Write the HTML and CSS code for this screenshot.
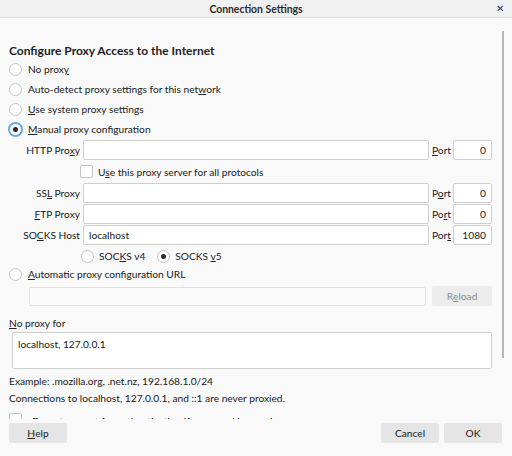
FILE: index.html
```html
<!DOCTYPE html>
<html>
<head>
<meta charset="utf-8">
<link rel="stylesheet" href="styles.css">
</head>
<body>
<div class="window">
  <div class="titlebar">
    <span class="title">Connection Settings</span>
    <span class="close">✕</span>
  </div>
  <div class="content">
    <div class="scrollbar"></div>
    <h1 class="heading">Configure Proxy Access to the Internet</h1>
    <div class="radio-row"><span class="radio"></span><span>No prox<u>y</u></span></div>
    <div class="radio-row"><span class="radio"></span><span>Auto-detect proxy settings for this net<u>w</u>ork</span></div>
    <div class="radio-row"><span class="radio"></span><span><u>U</u>se system proxy settings</span></div>
    <div class="radio-row"><span class="radio checked focus"></span><span><u>M</u>anual proxy configuration</span></div>

    <div class="proxy-grid">
      <label class="plabel">HTTP Pro<u>x</u>y</label>
      <div class="input"></div>
      <label class="port-label"><u>P</u>ort</label>
      <div class="input port">0</div>

      <div class="check-row">
        <span class="checkbox"></span><span>U<u>s</u>e this proxy server for all protocols</span>
      </div>

      <label class="plabel">SS<u>L</u> Proxy</label>
      <div class="input"></div>
      <label class="port-label">P<u>o</u>rt</label>
      <div class="input port">0</div>

      <label class="plabel"><u>F</u>TP Proxy</label>
      <div class="input"></div>
      <label class="port-label">Po<u>r</u>t</label>
      <div class="input port">0</div>

      <label class="plabel">SO<u>C</u>KS Host</label>
      <div class="input text">localhost</div>
      <label class="port-label">Por<u>t</u></label>
      <div class="input port">1080</div>

      <div class="socks-row">
        <span class="radio"></span><span class="socks-label">SOC<u>K</u>S v4</span>
        <span class="radio checked"></span><span>SOCKS <u>v</u>5</span>
      </div>
    </div>

    <div class="radio-row auto"><span class="radio"></span><span><u>A</u>utomatic proxy configuration URL</span></div>
    <div class="url-row">
      <div class="input url disabled"></div>
      <div class="button reload">R<u>e</u>load</div>
    </div>

    <div class="noproxy-label"><u>N</u>o proxy for</div>
    <div class="textarea">localhost, 127.0.0.1</div>
    <div class="note">Example: .mozilla.org, .net.nz, 192.168.1.0/24</div>
    <div class="note second">Connections to localhost, 127.0.0.1, and ::1 are never proxied.</div>
    <div class="check-row clipped"><span class="checkbox"></span><span class="clipped-text">Do not prompt for authentication if password is saved</span></div>
  </div>
  <div class="footer">
    <div class="button"><u>H</u>elp</div>
    <div class="spacer"></div>
    <div class="button">Cancel</div>
    <div class="button">OK</div>
  </div>
</div>
</body>
</html>
```

FILE: styles.css
```css
* { box-sizing: border-box; }
html, body { margin: 0; padding: 0; }
body {
  width: 512px;
  height: 456px;
  overflow: hidden;
  background: #f9f9fa;
  font-family: Lato, "Noto Sans", sans-serif;
  font-size: 10.2px;
  color: #202020;
}
u { text-decoration: underline; text-underline-offset: 1px; }
.window { width: 512px; height: 456px; display: flex; flex-direction: column; }
.titlebar {
  height: 18px;
  flex: none;
  background: #f0f0f0;
  border-bottom: 1px solid #dadada;
  display: flex;
  align-items: center;
  justify-content: center;
  position: relative;
}
.title { font-weight: bold; font-size: 10.4px; color: #2a2a2a; }
.close { position: absolute; right: 8px; top: 2px; font-size: 10px; color: #333; }
.content {
  position: relative;
  height: 401px;
  flex: none;
  overflow: hidden;
  padding: 25px 20px 0 9px;
}
.scrollbar {
  position: absolute;
  right: 8px;
  top: 13px;
  width: 2px;
  height: 327px;
  background: #b5b5b5;
}
.heading {
  margin: 0 0 0 0;
  font-size: 12px;
  font-weight: bold;
  color: #1e1e1e;
  line-height: 16px;
}
.radio-row {
  display: flex;
  align-items: center;
  height: 20px;
  gap: 6px;
}
.radio {
  width: 13px; height: 13px;
  border-radius: 50%;
  border: 1px solid #c4c4c4;
  background: #fff;
  flex: none;
  position: relative;
}
.radio.checked::after {
  content: "";
  position: absolute;
  left: 3px; top: 3px;
  width: 5px; height: 5px;
  border-radius: 50%;
  background: #2a2a2a;
}
.radio.focus { box-shadow: 0 0 0 1px #6aa4e8; border-color: #6aa4e8; }
.proxy-grid {
  display: grid;
  grid-template-columns: 71px 346px 18px 39px;
  column-gap: 3px;
  row-gap: 1px;
  align-items: center;
  margin-top: 1px;
}
.plabel { text-align: right; }
.input {
  height: 20px;
  background: #fff;
  border: 1px solid #cfcfcf;
  border-radius: 2px;
  line-height: 18px;
  padding: 0 5px;
}
.input.port { text-align: right; }
.check-row {
  grid-column: 1 / 5;
  display: flex;
  align-items: center;
  gap: 5px;
  height: 21px;
  padding-left: 71px;
}
.checkbox {
  width: 13px; height: 13px;
  border: 1px solid #c4c4c4;
  border-radius: 2px;
  background: #fff;
  flex: none;
}
.socks-row {
  grid-column: 1 / 5;
  display: flex;
  align-items: center;
  gap: 5px;
  height: 20px;
  padding-left: 72px;
}
.socks-label { margin-right: 7px; }
.radio-row.auto { margin-top: -2px; }
.url-row {
  display: flex;
  align-items: center;
  gap: 6px;
  margin-left: 20px;
  margin-top: 2px;
}
.input.url { width: 397px; height: 19px; background: #fbfbfb; border-color: #e0e0e0; }
.button {
  height: 20px;
  min-width: 58px;
  padding: 0 10px;
  display: flex;
  align-items: center;
  justify-content: center;
  background: #e5e5e5;
  border-radius: 2px;
  color: #202020;
}
.button.reload { width: 60px; color: #8c8c8c; background: #ececec; }
.noproxy-label { margin-top: 9px; line-height: 16px; }
.textarea {
  margin: 1px 0 0 3px;
  width: 480px;
  height: 37px;
  background: #fff;
  border: 1px solid #cfcfcf;
  border-radius: 2px;
  padding: 4px 5px;
  line-height: 14px;
}
.note { margin-top: 4px; line-height: 16px; }
.note.second { margin-top: 1px; }
.check-row.clipped { padding-left: 0; margin-top: 7px; gap: 10px; height: 16px; align-items: flex-start; }
.clipped-text { line-height: 16px; padding-top: 0; }
.footer {
  flex: none;
  display: flex;
  align-items: center;
  gap: 5px;
  padding: 4px 10px 0 9px;
}
.footer .button { width: 58px; }
.spacer { flex: 1; }
```
